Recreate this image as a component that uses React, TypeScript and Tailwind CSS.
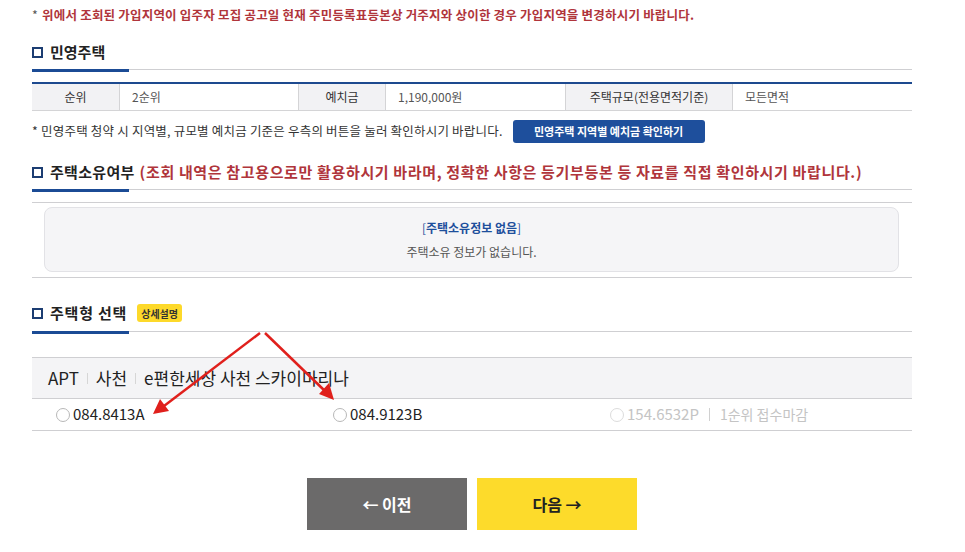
import React from 'react';

const font = { fontFamily: '"Noto Sans CJK KR", "Noto Sans", sans-serif' };

const SectionTitle: React.FC<{ children: React.ReactNode; gap?: string }> = ({ children, gap = 'mt-[5px]' }) => (
  <div>
    <div className="flex h-[24px] items-center">
      <span className="mr-[7px] inline-block h-[11px] w-[11px] border-2 border-[#1c3d72] bg-white" />
      {children}
    </div>
    <div className={`${gap} flex h-[3px] items-start`}>
      <div className="h-[3px] w-[97px] bg-[#1b4b95]" />
      <div className="h-px flex-1 bg-[#cfcfd2]" />
    </div>
  </div>
);

const Sep: React.FC = () => <span className="mx-[8px] inline-block h-[11px] w-px bg-[#d6d6d6]" />;

const App: React.FC = () => {
  const deposit = [
    { label: '순위', value: '2순위', lw: 'w-[88px]', vw: 'w-[178px]' },
    { label: '예치금', value: '1,190,000원', lw: 'w-[88px]', vw: 'w-[179px]' },
    { label: '주택규모(전용면적기준)', value: '모든면적', lw: 'w-[168px]', vw: 'flex-1' },
  ];

  return (
    <div className="relative h-[552px] w-[965px] overflow-hidden bg-white" style={font}>
      <div className="ml-[32px] w-[880px]">
        {/* notice */}
        <div className="flex h-[30px] items-center whitespace-nowrap text-[12.5px] font-bold tracking-[0.2px] text-[#b0353b]">
          <span className="mr-[4px] font-normal text-[#555]">*</span>
          위에서 조회된 가입지역이 입주자 모집 공고일 현재 주민등록표등본상 거주지와 상이한 경우 가입지역을 변경하시기 바랍니다.
        </div>

        {/* 민영주택 */}
        <div className="mt-[10px]">
          <SectionTitle>
            <span className="text-[15px] font-bold text-[#222]">민영주택</span>
          </SectionTitle>
        </div>

        <div className="mt-[10px] flex h-[29px] border-t-2 border-b border-t-[#1d4a8f] border-b-[#d4d4d6] text-[12px]">
          {deposit.map((d, i) => (
            <React.Fragment key={d.label}>
              <div className={`${d.lw} flex items-center justify-center border-r border-[#d4d4d6] bg-[#f2f2f4] text-[#333] ${i > 0 ? 'border-l' : ''}`}>
                {d.label}
              </div>
              <div className={`${d.vw} flex items-center pl-[12px] text-[#555]`}>{d.value}</div>
            </React.Fragment>
          ))}
        </div>

        <div className="mt-[9px] flex h-[23px] items-center whitespace-nowrap text-[12.5px] tracking-[0.2px] text-[#333]">
          <span>* 민영주택 청약 시 지역별, 규모별 예치금 기준은 우측의 버튼을 눌러 확인하시기 바랍니다.</span>
          <button className="ml-[10px] h-[23px] w-[192px] rounded-[3px] bg-[#1e4f9c] text-[11px] font-bold tracking-normal text-white">
            민영주택 지역별 예치금 확인하기
          </button>
        </div>

        {/* 주택소유여부 */}
        <div className="mt-[17px]">
          <SectionTitle>
            <span className="text-[15px] font-bold tracking-[0.3px] text-[#222]">주택소유여부</span>
            <span className="ml-[5px] whitespace-nowrap text-[15px] font-bold tracking-[0.65px] text-[#b0353b]">
              (조회 내역은 참고용으로만 활용하시기 바라며, 정확한 사항은 등기부등본 등 자료를 직접 확인하시기 바랍니다.)
            </span>
          </SectionTitle>
        </div>

        <div className="mt-[10px] border-y border-[#cfcfd2] pt-[4px] pb-[5px] pl-[12px] pr-[13px]">
          <div className="flex h-[65px] flex-col items-center justify-center rounded-[8px] border border-[#e2e2e6] bg-[#f5f5f7] text-[12px]">
            <div className="text-[#1e4f9c]">
              [<span className="font-bold">주택소유정보 없음</span>]
            </div>
            <div className="mt-[6px] text-[#555]">주택소유 정보가 없습니다.</div>
          </div>
        </div>

        {/* 주택형 선택 */}
        <div className="mt-[23px]">
          <SectionTitle gap="mt-[6px]">
            <span className="text-[15px] font-bold tracking-[0.8px] text-[#222]">주택형 선택</span>
            <span className="ml-[10px] flex h-[18px] items-center rounded-[3px] bg-[#fdd92a] px-[4px] text-[10px] font-bold text-[#333]">
              상세설명
            </span>
          </SectionTitle>
        </div>

        <div className="mt-[23px] border-t border-[#cfcfd2]">
          <div className="flex h-[41px] items-center border-b border-[#cfcfd2] bg-[#f4f4f6] pl-[16px] text-[17px] text-[#222]">
            <span>APT</span>
            <Sep />
            <span>사천</span>
            <Sep />
            <span>e편한세상 사천 스카이마리나</span>
          </div>
          <div className="grid h-[32px] grid-cols-[277px_277px_1fr] items-center border-b border-[#cfcfd2] pl-[24px] text-[15px]">
            <label className="flex items-center text-[#222]">
              <span className="mr-[3px] inline-block h-[14px] w-[14px] rounded-full border border-[#b8b8b8] bg-white" />
              084.8413A
            </label>
            <label className="flex items-center text-[#222]">
              <span className="mr-[3px] inline-block h-[14px] w-[14px] rounded-full border border-[#b8b8b8] bg-white" />
              084.9123B
            </label>
            <label className="flex items-center text-[#c4c4c4]">
              <span className="mr-[3px] inline-block h-[14px] w-[14px] rounded-full border border-[#dcdcdc] bg-white" />
              154.6532P
              <span className="mx-[10px] inline-block h-[13px] w-px bg-[#d0d0d0]" />
              <span className="text-[14px]">1순위 접수마감</span>
            </label>
          </div>
        </div>

        {/* buttons */}
        <div className="mt-[47px] flex justify-center gap-[10px]">
          <button className="flex h-[52px] w-[160px] items-center justify-center bg-[#6b6a6a] text-[16px] font-bold text-white">
            ← 이전
          </button>
          <button className="flex h-[52px] w-[160px] items-center justify-center bg-[#fddb2b] text-[16px] font-bold text-[#222]">
            다음 →
          </button>
        </div>
      </div>

      {/* annotation arrows */}
      <svg className="pointer-events-none absolute left-0 top-0" width="965" height="552" viewBox="0 0 965 552">
        <line x1="260" y1="333" x2="164" y2="406" stroke="#e0201c" strokeWidth="2.5" />
        <polygon points="153,414 160,399 169,411" fill="#e0201c" />
        <line x1="265" y1="333" x2="326" y2="392" stroke="#e0201c" strokeWidth="2.5" />
        <polygon points="334,400 319,394 329,383" fill="#e0201c" />
      </svg>
    </div>
  );
};

export default App;
